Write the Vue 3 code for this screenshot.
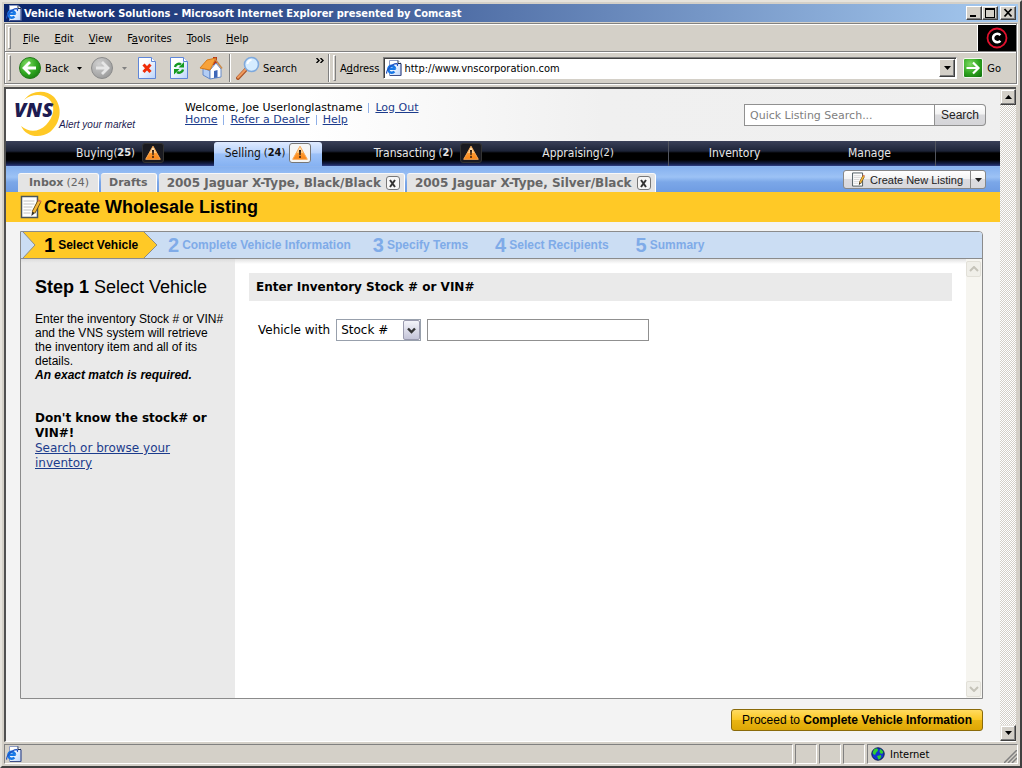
<script setup>
import { ref } from 'vue'

const menus = ['File', 'Edit', 'View', 'Favorites', 'Tools', 'Help']
const accessIndex = { Favorites: 1 }
const menuParts = menus.map((m) => {
  const i = accessIndex[m] || 0
  return { name: m, before: m.slice(0, i), key: m[i], after: m.slice(i + 1) }
})

const steps = [
  'Select Vehicle',
  'Complete Vehicle Information',
  'Specify Terms',
  'Select Recipients',
  'Summary',
]

const tabs = ['2005 Jaguar X-Type, Black/Black', '2005 Jaguar X-Type, Silver/Black']

const address = ref('http://www.vnscorporation.com')
const quickSearch = ref('')
const searchBy = ref('Stock #')
const vehicleNumber = ref('')
</script>

<template>
  <div class="window">
    <svg class="defs" width="0" height="0" aria-hidden="true">
      <defs>
        <linearGradient id="warnFill" x1="0" y1="0" x2="0" y2="1">
          <stop offset="0" stop-color="#fff3d8" />
          <stop offset="0.5" stop-color="#ffc67a" />
          <stop offset="0.55" stop-color="#ff9a30" />
          <stop offset="1" stop-color="#f98314" />
        </linearGradient>
        <linearGradient id="docFill" x1="0" y1="0" x2="1" y2="1">
          <stop offset="0.3" stop-color="#fff" />
          <stop offset="1" stop-color="#b9d3fb" />
        </linearGradient>
        <radialGradient id="greenFill" cx="0.35" cy="0.3" r="0.8">
          <stop offset="0" stop-color="#7bd85f" />
          <stop offset="0.6" stop-color="#2fa51f" />
          <stop offset="1" stop-color="#167a10" />
        </radialGradient>
        <radialGradient id="grayFill" cx="0.35" cy="0.3" r="0.8">
          <stop offset="0" stop-color="#cfcfcf" />
          <stop offset="1" stop-color="#979797" />
        </radialGradient>
      </defs>
      <symbol id="iePage" viewBox="0 0 16 16">
        <path d="M3.500 .5h8.500l3 3v12H3.500z" fill="url(#docFill)" stroke="#8d9cc4" />
        <path d="M12 .5v3h3" fill="#fff" stroke="#222c44" />
        <path d="M15 4v11.500H4" fill="none" stroke="#3f4f88" />
        <path d="M2.500 8.800h7.200M9.200 8.800a3.500 3.500 0 1 0-.8 2.700" fill="none" stroke="#1878e6" stroke-width="2.400" />
        <path d="M1 13.500c-1.800-2 4.500-9.500 9.500-9.800 1.300 0 1.300 1.200.7 2.200" fill="none" stroke="#2050c0" stroke-width="1.200" />
      </symbol>
      <symbol id="warning" viewBox="0 0 16 16">
        <path d="M8 1.200 15.300 14.300H.7z" fill="url(#warnFill)" stroke="#f9a955" stroke-linejoin="round" />
        <path d="M7 5h2l-.4 5.200H7.400z" fill="#2b1a10" />
        <rect x="7.100" y="11.200" width="1.800" height="1.600" fill="#2b1a10" />
      </symbol>
      <symbol id="notepad" viewBox="0 0 22 24">
        <path d="M1.500 1.500h16v21h-16z" fill="#fff" stroke="#49555c" stroke-width="1.500" />
        <path d="M3.500 6h11M3.500 9h11M3.500 12h9M3.500 15h8M3.500 18h7" stroke="#c2c2c2" />
        <path d="M19.200 6.500 13.500 17.500" stroke="#5c430f" stroke-width="4" />
        <path d="M19.200 6.500 13.500 17.500" stroke="#f4b63a" stroke-width="2.600" />
        <path d="M19.200 6.500l.7-1.400" stroke="#df6b4c" stroke-width="4" />
        <path d="M12 16.500l3 1.600-3.600 3z" fill="#3a3327" />
      </symbol>
    </svg>

    <header class="titlebar">
      <svg class="i16"><use href="#iePage" /></svg>
      <h1>Vehicle Network Solutions - Microsoft Internet Explorer presented by Comcast</h1>
      <button class="win" aria-label="Minimize"><svg width="12" height="10"><path d="M2 7h6v2H2z" /></svg></button>
      <button class="win" aria-label="Maximize"><svg width="12" height="10"><path d="M1 0h10v10H1zM2 2v7h8V2z" fill-rule="evenodd" /></svg></button>
      <button class="win close" aria-label="Close"><svg width="12" height="10"><path d="M2.500 1l7 7.500M9.500 1l-7 7.500" stroke="#000" stroke-width="1.800" /></svg></button>
    </header>

    <div class="chrome">
      <div class="menubar">
        <span class="grip"></span>
        <nav class="menus" aria-label="Menu">
          <button v-for="m in menuParts" :key="m.name">{{ m.before }}<u>{{ m.key }}</u>{{ m.after }}</button>
        </nav>
        <div class="brand">
          <svg width="38" height="26" viewBox="0 0 38 26">
            <circle cx="19" cy="13" r="9.500" fill="none" stroke="#e0102c" stroke-width="1.800" />
            <path d="M22.400 10.200a4.200 4.200 0 1 0 0 5.600" fill="none" stroke="#fff" stroke-width="2.500" />
          </svg>
        </div>
      </div>

      <div class="toolbar">
        <span class="grip"></span>
        <button class="tool back">
          <svg width="24" height="24" viewBox="0 0 24 24">
            <circle cx="12" cy="12" r="10.500" fill="url(#greenFill)" stroke="#257a1c" />
            <path d="M12 6l-6 6 6 6M6.500 12H18" fill="none" stroke="#fff" stroke-width="2.800" />
          </svg>
          <span>Back</span>
          <svg width="5" height="3"><path d="M0 0h5L2.500 3z" /></svg>
        </button>
        <button class="tool forward" aria-label="Forward">
          <svg width="24" height="24" viewBox="0 0 24 24">
            <circle cx="12" cy="12" r="10.500" fill="url(#grayFill)" stroke="#8c8c8c" />
            <path d="M12 6l6 6-6 6M17.500 12H6" fill="none" stroke="#e6e6e6" stroke-width="2.800" />
          </svg>
          <svg width="5" height="3"><path d="M0 0h5L2.500 3z" fill="#808080" /></svg>
        </button>
        <button class="tool" aria-label="Stop">
          <svg width="20" height="24" viewBox="0 0 20 24">
            <path d="M1.500 1.500h13l4 4v17h-17z" fill="url(#docFill)" stroke="#5f86d8" />
            <path d="M14.500 1.500v4h4" fill="#fff" stroke="#5f86d8" />
            <path d="M6.500 8.500l7 7.500M13.500 8.500l-7 7.500" stroke="#f02d08" stroke-width="3" />
          </svg>
        </button>
        <button class="tool" aria-label="Refresh">
          <svg width="20" height="24" viewBox="0 0 20 24">
            <path d="M1.500 1.500h13l4 4v17h-17z" fill="url(#docFill)" stroke="#5f86d8" />
            <path d="M14.500 1.500v4h4" fill="#fff" stroke="#5f86d8" />
            <path d="M6 11c.5-3 4-4 6-2.500M14 13.500c-.5 3-4 4-6 2.500" fill="none" stroke="#139a20" stroke-width="2.400" />
            <path d="M15 6v5.500H9.500zM5 18.500V13h5.500z" fill="#139a20" />
          </svg>
        </button>
        <button class="tool" aria-label="Home">
          <svg width="24" height="24" viewBox="0 0 24 24">
            <path d="M14 1h4v8h-4z" fill="#b5321c" />
            <path d="M4 12l7 3v8l-7-4z" fill="#b3cdf4" stroke="#6489c8" />
            <path d="M11 14l6-7 5 6v8l-11 2z" fill="#fff" stroke="#6489c8" />
            <path d="M1 12L8 4l9-2-6 12z" fill="#f7a23a" stroke="#d77a18" />
            <path d="M16 3l7 9.500" stroke="#c98a4a" stroke-width="1.500" />
            <path d="M15 15l3.500-1v7.500l-3.500.6z" fill="#3e67b8" />
          </svg>
        </button>
        <span class="vline"></span>
        <button class="tool search">
          <svg width="24" height="24" viewBox="0 0 24 24">
            <path d="M2 22l8-8.500" stroke="#a8552a" stroke-width="4" stroke-linecap="round" />
            <path d="M2 21.500l8-8.500" stroke="#f09a5c" stroke-width="2" stroke-linecap="round" />
            <circle cx="15.500" cy="8.500" r="7" fill="#d5ecff" stroke="#7fa9dc" stroke-width="1.600" />
            <path d="M11.500 8a4.500 4.500 0 0 1 4-4" fill="none" stroke="#fff" stroke-width="2" />
          </svg>
          <span>Search</span>
        </button>
        <span class="more">
          <svg width="8" height="5"><path d="M.5 0l2.500 2.500L.5 5M4.500 0L7 2.500 4.500 5" fill="none" stroke="#000" stroke-width="1.400" /></svg>
        </span>
        <span class="vline tight"></span>
        <span class="grip"></span>
        <label class="addr-label" for="address">A<u>d</u>dress</label>
        <div class="addr-box">
          <svg class="i16"><use href="#iePage" /></svg>
          <input id="address" v-model="address" type="text" />
          <button class="drop" aria-label="Show addresses"><svg width="7" height="4"><path d="M0 0h7L3.500 4z" /></svg></button>
        </div>
        <button class="tool go">
          <svg width="20" height="20" viewBox="0 0 20 20">
            <rect x=".5" y=".5" width="19" height="19" rx="1.500" fill="url(#greenFill)" stroke="#f4f8f0" />
            <path d="M10 4.500l5.500 5.500-5.500 5.500M15 10H3.500" fill="none" stroke="#fff" stroke-width="2.200" />
          </svg>
          <span>Go</span>
        </button>
      </div>
    </div>

    <div class="viewport">
      <main class="page">
        <div class="masthead">
          <svg class="logo" width="126" height="48" viewBox="0 0 126 48" role="img" aria-label="VNS, Alert your market">
            <path d="M11 9C18-1 33-2 41 6c9 10 7 26-4 35-10 7-24 5-29-6 8 7 18 6 25-1 8-8 10-19 3-26C29 2 18 3 11 9z" fill="#ffc926" />
            <text x="1" y="26" class="logo-name">VNS</text>
            <text x="46" y="37" class="logo-tag">Alert your market</text>
          </svg>
          <div class="welcome">
            <div><span>Welcome, Joe Userlonglastname</span><i></i><a href="#">Log Out</a></div>
            <div><a href="#">Home</a><i></i><a href="#">Refer a Dealer</a><i></i><a href="#">Help</a></div>
          </div>
          <form class="quick" @submit.prevent>
            <input v-model="quickSearch" type="text" placeholder="Quick Listing Search..." aria-label="Quick Listing Search" />
            <button>Search</button>
          </form>
        </div>

        <nav class="mainnav" aria-label="Main">
          <a href="#" class="first">Buying<b>(<strong>25</strong>)</b><em><svg class="i16"><use href="#warning" /></svg></em></a>
          <a href="#" class="active">Selling<b class="gap">(<strong>24</strong>)</b><em><svg class="i16"><use href="#warning" /></svg></em></a>
          <a href="#">Transacting<b class="gap">(<strong>2</strong>)</b><em><svg class="i16"><use href="#warning" /></svg></em></a>
          <a href="#">Appraising<b>(2)</b></a>
          <span></span>
          <a href="#" class="ruled">Inventory</a>
          <a href="#" class="manage">Manage</a>
          <span class="ruled"></span>
        </nav>

        <div class="subnav">
          <a href="#" class="tab wide"><strong>Inbox</strong> (24)</a>
          <a href="#" class="tab"><strong>Drafts</strong></a>
          <div v-for="t in tabs" :key="t" class="tab doc">
            <a href="#"><strong>{{ t }}</strong></a>
            <button :aria-label="'Close ' + t"><svg width="13" height="13"><path d="M4 3l5 7M9 3l-5 7" stroke="#333" stroke-width="2" /></svg></button>
          </div>
          <div class="create">
            <button class="create-main"><svg width="15" height="15"><use href="#notepad" /></svg>Create New Listing</button>
            <button class="create-more" aria-label="More listing types"><svg width="7" height="4"><path d="M0 0h7L3.500 4z" fill="#222" /></svg></button>
          </div>
        </div>

        <div class="pagetitle">
          <svg width="22" height="24"><use href="#notepad" /></svg>
          <h2>Create Wholesale Listing</h2>
        </div>

        <div class="content">
          <section class="panel">
            <ol class="steps">
              <li v-for="(s, i) in steps" :key="s" :class="{ current: i === 0 }">
                <svg v-if="i === 0" class="arrow" width="137" height="26" viewBox="0 0 137 26" aria-hidden="true">
                  <path d="M2 0h121l13 13-13 13H2l12-13z" fill="#ffc926" />
                  <path d="M2 0l12 13L2 26M123 0l13 13-13 13" fill="none" stroke="#8d8d84" />
                </svg>
                <span class="num">{{ i + 1 }}</span><span class="name">{{ s }}</span>
              </li>
            </ol>
            <div class="columns">
              <aside>
                <h3><strong>Step 1</strong> Select Vehicle</h3>
                <p>Enter the inventory Stock # or VIN# and the VNS system will retrieve the inventory item and all of its details.<br /><strong class="exact">An exact match is required.</strong></p>
                <p class="help"><strong>Don't know the stock# or VIN#!</strong><br /><a href="#">Search or browse your inventory</a></p>
              </aside>
              <div class="entry">
                <h4>Enter Inventory Stock # or VIN#</h4>
                <form class="lookup" @submit.prevent>
                  <label for="by">Vehicle with</label>
                  <div class="picker">
                    <select id="by" v-model="searchBy">
                      <option>Stock #</option>
                      <option>VIN #</option>
                    </select>
                    <span class="picker-arrow"><svg width="9" height="7"><path d="M1 1.500l3.500 3.500L8 1.500" fill="none" stroke="#333" stroke-width="2.400" /></svg></span>
                  </div>
                  <input v-model="vehicleNumber" type="text" aria-label="Stock or VIN number" />
                </form>
              </div>
              <div class="inner-scroll">
                <span><svg width="10" height="6"><path d="M1 5l4-4 4 4" fill="none" stroke="#c5c3b9" stroke-width="2" /></svg></span>
                <span><svg width="10" height="6"><path d="M1 1l4 4 4-4" fill="none" stroke="#c5c3b9" stroke-width="2" /></svg></span>
              </div>
            </div>
          </section>
          <button class="proceed">Proceed to <strong>Complete Vehicle Information</strong></button>
        </div>
      </main>
      <div class="scrollbar">
        <button aria-label="Scroll up"><svg width="7" height="4"><path d="M0 4h7L3.500 0z" /></svg></button>
        <button aria-label="Scroll down"><svg width="7" height="4"><path d="M0 0h7L3.500 4z" /></svg></button>
      </div>
    </div>

    <footer class="status">
      <div class="cell main"><svg class="i16"><use href="#iePage" /></svg></div>
      <div class="cell"></div>
      <div class="cell"></div>
      <div class="cell"></div>
      <div class="cell zone">
        <svg width="14" height="14" viewBox="0 0 14 14">
          <circle cx="7" cy="7" r="6.200" fill="#1234d0" stroke="#0a1a50" />
          <path d="M3 2.500c2-1.500 4-1 4 .5S5 5 4.500 7 2 7 1.500 6zM9 2c2 .5 3.500 2.500 3.200 4L10 7 8.500 5zM6 9l4-1c1 2-1 4.500-2.500 4.500z" fill="#2fd02f" />
        </svg>
        <span>Internet</span>
        <svg class="resize" width="13" height="13"><path d="M0 13L13 0M4 13l9-9M8 13l5-5" stroke="#808080" stroke-width="1.500" /></svg>
      </div>
    </footer>
  </div>
</template>

<style>
html, body { background: #d4d0c8; }
</style>

<style scoped>
* { box-sizing: border-box; }
button, input, select { font: inherit; color: inherit; margin: 0; padding: 0; border: 0; background: none; border-radius: 0; outline: 0; }
h1, h2, h3, h4, p, ol { margin: 0; padding: 0; font-weight: normal; }
svg { display: block; flex: none; }
.defs { position: absolute; }
.i16 { width: 16px; height: 16px; }

.window {
  display: flex; flex-direction: column; min-height: 100vh; padding: 2px;
  background: #d4d0c8; border: solid; border-width: 2px; border-color: #e6e3dc #404040 #404040 #e6e3dc;
  font: 11px/14px "DejaVu Sans Condensed", "DejaVu Sans", sans-serif; color: #000;
}
.titlebar {
  display: flex; align-items: center; height: 18px; padding: 0 2px;
  background: linear-gradient(90deg, #0a246a, #a6caf0);
}
.titlebar h1 { flex: 1; margin: 2px 0 0 2px; font-size: 11px; font-weight: bold; color: #fff; white-space: nowrap; }
.win {
  display: flex; align-items: center; justify-content: center; width: 16px; height: 14px;
  background: #d4d0c8; border: 1px solid; border-color: #fff #404040 #404040 #fff; box-shadow: inset -1px -1px #808080;
}
.close { margin-left: 2px; }

.chrome { margin: 1px 1px 0 0; border: 1px solid #808080; box-shadow: 1px 1px #fff, inset 1px 1px #fff; }
.menubar { display: flex; align-items: center; height: 28px; padding-left: 3px; border-bottom: 1px solid #808080; }
.grip { width: 3px; height: 22px; background: #d4d0c8; border: 1px solid; border-color: #fff #808080 #808080 #fff; }
.menus { display: flex; flex: 1; gap: 15px; margin-left: 12px; padding-top: 2px; }
.brand { display: flex; align-items: center; justify-content: center; align-self: stretch; width: 39px; background: #000; border-left: 1px solid #fff; margin-top: 1px; }
.toolbar { display: flex; align-items: center; height: 31px; padding-left: 3px; border-top: 1px solid #fff; }
.toolbar .grip { height: 26px; }
.tool { display: flex; align-items: center; }
.tool span { padding-top: 2px; }
.back { margin-left: 7px; }
.back span { margin: 0 8px 0 3px; }
.forward { margin-left: 8px; gap: 8px; }
.tool + .tool[aria-label="Stop"] { margin-left: 10px; }
.tool + .tool[aria-label="Refresh"] { margin-left: 12px; }
.tool + .tool[aria-label="Home"] { margin-left: 10px; }
.vline { width: 2px; height: 28px; margin: 0 5px 0 6px; border-left: 1px solid #808080; border-right: 1px solid #fff; }
.tight { margin: 0 3px 0 0; }
.search span { margin-left: 3px; }
.more { align-self: flex-start; margin: 5px 4px 0 19px; }
.addr-label { margin: 0 4px 0 4px; padding-top: 2px; }
.addr-box {
  display: flex; flex: 1; align-items: center; min-width: 0; height: 22px; padding: 1px 1px 1px 2px;
  background: #fff; border: 1px solid; border-color: #808080 #fff #fff #808080; box-shadow: inset 1px 1px #404040;
}
.addr-box input { flex: 1; min-width: 0; margin-left: 2px; padding-top: 2px; }
.drop {
  display: flex; align-items: center; justify-content: center; width: 16px; align-self: stretch;
  background: #d4d0c8; border: 1px solid; border-color: #fff #404040 #404040 #fff; box-shadow: inset -1px -1px #808080;
}
.go { gap: 4px; margin: 0 15px 0 6px; }

.viewport { display: flex; flex: 1; margin: 3px 2px 0 0; border: solid; border-width: 2px 0 1px 2px; border-color: #505050 #fff #fff #505050; }
.page { display: flex; flex: 1; flex-direction: column; min-width: 0; background: #f3f3f3; }
.scrollbar {
  display: flex; flex-direction: column; justify-content: space-between; width: 16px;
  background: repeating-conic-gradient(#fff 0 25%, #d4d0c8 0 50%) 0 0 / 2px 2px;
}
.scrollbar button {
  display: flex; align-items: center; justify-content: center; height: 16px;
  background: #d4d0c8; border: 1px solid; border-color: #e8e5df #404040 #404040 #e8e5df; box-shadow: inset -1px -1px #808080, inset 1px 1px #fff;
}

.masthead { display: flex; height: 52px; background: linear-gradient(90deg, #fff 30%, #f0f0f0 60%, #efefef); }
.logo { margin: 2px 0 0 7px; overflow: visible; }
.logo-name { font: italic 800 20px "Open Sans", "DejaVu Sans", sans-serif; fill: #1d1c52; }
.logo-tag { font: italic 10px "Liberation Sans", sans-serif; fill: #1d1c52; }
.welcome { flex: 1; margin: 13px 0 0 46px; font: 11px/12px "DejaVu Sans", sans-serif; white-space: nowrap; }
.welcome div { display: flex; align-items: center; }
.welcome i { width: 1px; height: 10px; margin: 0 6px; background: #8fb0e8; }
a { color: #1c3c8c; }
.quick { display: flex; align-items: stretch; width: 242px; height: 22px; margin: 15px 14px 0 0; }
.quick input { flex: 1; min-width: 0; padding-left: 5px; background: #fff; border: 1px solid #909090; font: 11px "DejaVu Sans", sans-serif; }
.quick input::placeholder { color: #808080; opacity: 1; }
.quick button {
  width: 51px; border: 1px solid #909090; border-left: 0; border-radius: 0 4px 4px 0; color: #222;
  background: linear-gradient(#fff, #f3f3f3 45%, #d9d9dc 50%, #d4d4d8); font: 12px "Liberation Sans", sans-serif;
}

.mainnav {
  display: grid; grid-template-columns: 208fr 108fr 212fr 88fr 46fr 132fr 135fr 65fr; height: 26px;
  background: linear-gradient(#3a4058, #1d2438 40%, #000 48%, #000 75%, #14204e 92%, #2d3f86); border-bottom: 1px solid #8db4ee;
}
.mainnav a { display: flex; align-items: center; justify-content: center; padding-bottom: 2px; color: #e6e6e6; font-size: 12px; text-decoration: none; white-space: nowrap; }
.mainnav .first { padding-left: 20px; }
.mainnav .manage { padding-left: 4px; }
.mainnav b { font-weight: normal; font-size: 11px; }
.mainnav .gap { margin-left: 3px; }
.mainnav em { display: flex; align-items: center; justify-content: center; width: 22px; height: 20px; margin-left: 7px; border: 1px solid #333; border-radius: 3px; background: #1a1a20; }
.mainnav .active { margin-top: 1px; color: #111; background: linear-gradient(#dfeaff, #b8d2fb 45%, #9cc1f8 50%, #86b2f2); border-radius: 3px 3px 0 0; }
.mainnav .active em { margin-left: 4px; background: #f5f5f5; border-color: #777; }
.ruled { border-left: 1px solid #50545e; }

.subnav { display: flex; align-items: flex-end; height: 25px; padding: 0 14px 0 12px; background: linear-gradient(#86b1f0, #9cc2f5 40%, #7ba7e8 60%, #6f9ce2); font: 11px/14px "DejaVu Sans", sans-serif; }
.tab { display: flex; align-items: center; gap: 3px; height: 19px; margin-right: 2px; padding: 0 8px; background: #e4e4e4; border-top: 1px solid #f8f8f8; border-right: 1px solid #fff; border-radius: 3px 3px 0 0; color: #666; text-decoration: none; white-space: nowrap; }
.tab a { color: #666; text-decoration: none; }
.wide { padding: 0 9px 0 11px; }
.doc { padding: 0 4px 0 8px; gap: 5px; font-size: 12px; }
.doc button { border: 1px solid #777; border-radius: 3px; background: #f6f6f6; width: 14px; height: 14px; display: flex; align-items: center; justify-content: center; }
.create { display: flex; align-self: center; height: 19px; margin-left: auto; border: 1px solid #888; border-radius: 3px; background: linear-gradient(#fff, #f3f3f3 48%, #dcdce0 50%, #d8d8dc); color: #222; }
.create-main { display: flex; align-items: center; gap: 4px; padding: 0 7px; font: 11px "Liberation Sans", sans-serif; white-space: nowrap; }
.create-more { display: flex; align-items: center; justify-content: center; width: 15px; border-left: 1px solid #888; }

.pagetitle { display: flex; align-items: center; gap: 2px; height: 30px; padding-left: 14px; background: #ffc926; }
h2 { font: bold 18px/22px "Liberation Sans", sans-serif; }

.content { display: flex; flex: 1; flex-direction: column; padding: 9px 17px 10px 14px; }
.panel { display: flex; flex: 1; flex-direction: column; border: 1px solid #8b8b8b; border-top-right-radius: 4px; background: #fff; }
.steps { display: flex; gap: 22px; height: 27px; list-style: none; background: #cbddf3; border-bottom: 1px solid #8b8b8b; border-top-right-radius: 3px; font: bold 12px/26px "Liberation Sans", sans-serif; color: #7fabe8; }
.steps li { display: flex; align-items: center; white-space: nowrap; }
.steps li:nth-child(n + 3) { padding-right: 5px; }
.num { font-size: 20px; margin-right: 3px; }
.current { position: relative; width: 125px; padding-left: 23px; color: #000; }
.current .arrow { position: absolute; left: 0; top: 0; }
.current span { position: relative; }
.columns { display: flex; flex: 1; background: linear-gradient(#e2e2e2, #fff 5px); }
aside { width: 214px; padding: 17px 10px 0 14px; background: linear-gradient(#dcdcdc, #eaeaea 4px); font: 12px/14px "Liberation Sans", sans-serif; }
h3 { margin-bottom: 14px; font-size: 18px; line-height: 22px; }
.exact { font-style: italic; }
.help { margin-top: 29px; font: 12px/15px "DejaVu Sans", sans-serif; }
.entry { flex: 1; min-width: 0; padding: 14px 14px 0; font: 12px/16px "DejaVu Sans", sans-serif; }
h4 { padding: 6px 7px; font: bold 12px/16px "DejaVu Sans", sans-serif; background: #eaeaea; }
.lookup { display: flex; align-items: center; margin: 18px 0 0 9px; }
.picker { position: relative; width: 85px; height: 22px; margin: 0 6px; }
.picker select { width: 100%; height: 100%; padding-left: 4px; appearance: none; background: #fff; border: 1px solid #98a0ac; }
.picker-arrow { position: absolute; right: 1px; top: 1px; display: flex; align-items: center; justify-content: center; width: 17px; height: 20px; border: 1px solid #9a9aae; border-radius: 2px; background: linear-gradient(#f4f4fa, #c4c4d8); pointer-events: none; }
.lookup input { flex: 0 1 222px; min-width: 0; height: 22px; padding: 0 4px; border: 1px solid #909090; background: #fff; }
.inner-scroll { display: flex; flex-direction: column; justify-content: space-between; width: 16px; padding: 2px 1px 1px 0; background: #f6f5f0; }
.inner-scroll span { display: flex; align-items: center; justify-content: center; height: 16px; border: 1px solid #e2e0d8; border-radius: 2px; background: #f0efe9; }
.proceed {
  align-self: flex-end; height: 22px; margin-top: 10px; padding: 0 10px; border: 1px solid #8a6a0a; border-radius: 3px;
  background: linear-gradient(#ffdb60, #fbc825 48%, #eab512 52%, #dca605); font: 12px "Liberation Sans", sans-serif; white-space: nowrap;
}

.status { display: flex; gap: 2px; height: 20px; margin-top: 2px; }
.cell { width: 22px; border: 1px solid; border-color: #808080 #fff #fff #808080; }
.main { flex: 1; padding: 1px 0 0 1px; }
.zone { position: relative; display: flex; align-items: center; gap: 5px; width: 151px; padding-left: 3px; }
.zone span { padding-top: 2px; }
.resize { position: absolute; right: 0; bottom: 0; }
</style>
